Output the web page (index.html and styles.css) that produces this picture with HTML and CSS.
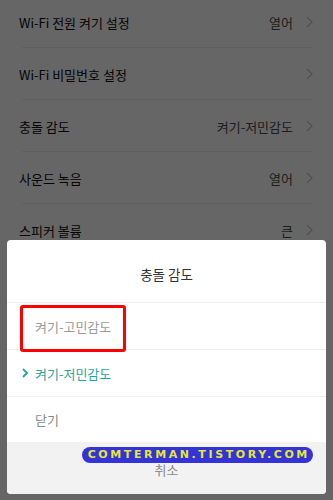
FILE: index.html
```html
<!DOCTYPE html>
<html>
<head>
	<meta charset="utf-8">
	<title>충돌 감도</title>
	<link rel="stylesheet" href="styles.css">
</head>
<body>
	<ul class="settings">
		<li class="item"><span class="label">Wi-Fi 전원 켜기 설정</span><span class="value">열어</span><svg class="chev" viewBox="0 0 7 12"><polyline points="1,1 6,6 1,11"/></svg></li>
		<li class="item"><span class="label">Wi-Fi 비밀번호 설정</span><span class="value"></span><svg class="chev" viewBox="0 0 7 12"><polyline points="1,1 6,6 1,11"/></svg></li>
		<li class="item"><span class="label">충돌 감도</span><span class="value">켜기-저민감도</span><svg class="chev" viewBox="0 0 7 12"><polyline points="1,1 6,6 1,11"/></svg></li>
		<li class="item"><span class="label">사운드 녹음</span><span class="value">열어</span><svg class="chev" viewBox="0 0 7 12"><polyline points="1,1 6,6 1,11"/></svg></li>
		<li class="item"><span class="label">스피커 볼륨</span><span class="value">큰</span><svg class="chev" viewBox="0 0 7 12"><polyline points="1,1 6,6 1,11"/></svg></li>
		<li class="item"><span class="label">녹화 해상도</span><span class="value">1080P</span><svg class="chev" viewBox="0 0 7 12"><polyline points="1,1 6,6 1,11"/></svg></li>
	</ul>

	<div class="mask"></div>

	<div class="sheet">
		<div class="sheet-title">충돌 감도</div>
		<div class="option">켜기-고민감도</div>
		<div class="option selected"><svg class="tick" viewBox="0 0 6 10"><polyline points="1,1 5,5 1,9"/></svg>켜기-저민감도</div>
		<div class="option close">닫기</div>
		<div class="cancel">취소</div>
	</div>

	<div class="mark"></div>
	<div class="watermark">COMTERMAN.TISTORY.COM</div>
</body>
</html>
```

FILE: styles.css
```css
html, body { margin: 0; padding: 0; }
body {
	width: 333px;
	height: 500px;
	overflow: hidden;
	position: relative;
	background: #fff;
	font-family: "Noto Sans CJK KR", "Noto Sans", sans-serif;
	font-size: 13px;
}

/* settings list behind the dialog */
.settings { list-style: none; margin: -4px 0 0; padding: 0; }
.item {
	position: relative;
	display: flex;
	align-items: center;
	height: 52px;
	padding: 0 20px 0 19px;
	color: #0a0a0a;
}
.item::after {
	content: "";
	position: absolute;
	left: 22px;
	right: 21px;
	bottom: 0;
	height: 1px;
	background: #f0f0f0;
}
.label { flex: 1; }
.value { color: #4a4a4a; margin-right: 13px; }
.chev { width: 7px; height: 12px; fill: none; stroke: #c8c8c8; stroke-width: 1.2; }

.mask { position: absolute; inset: 0; background: rgba(0, 0, 0, 0.6); }

/* bottom dialog */
.sheet {
	position: absolute;
	left: 7px;
	right: 7px;
	top: 240px;
	height: 254px;
	background: #fff;
	border-radius: 4px;
	overflow: hidden;
	display: flex;
	flex-direction: column;
}
.sheet-title {
	height: 63px;
	box-sizing: border-box;
	padding-top: 6px;
	display: flex;
	align-items: center;
	justify-content: center;
	color: #333;
	font-size: 13.5px;
	border-bottom: 1px solid #eee;
}
.option {
	height: 46px;
	display: flex;
	align-items: center;
	padding-left: 28px;
	color: #9a9a9a;
	border-bottom: 1px solid #eee;
}
.option.selected { color: #1fa79b; padding-left: 15px; }
.tick { width: 6px; height: 10px; margin-right: 7px; fill: none; stroke: #1fa79b; stroke-width: 1.8; }
.option.close { color: #8a8a8a; height: 45px; border-bottom: 0; }
.cancel {
	flex: 1;
	display: flex;
	align-items: center;
	justify-content: center;
	padding-top: 2px;
	background: #f2f2f2;
	color: #8a8a8a;
}

/* annotation and watermark on top of the screenshot */
.mark {
	position: absolute;
	left: 20px;
	top: 305px;
	width: 100px;
	height: 41px;
	border: 3px solid #f00;
	border-radius: 3px;
}
.watermark {
	position: absolute;
	left: 82px;
	top: 447px;
	width: 231px;
	height: 16px;
	line-height: 16px;
	background: #3333d6;
	border-radius: 8px;
	color: #e6e63a;
	text-align: center;
	font-family: "DejaVu Sans", sans-serif;
	font-weight: bold;
	font-size: 11px;
	letter-spacing: 2.6px;
	text-indent: 2.6px;
}
```
